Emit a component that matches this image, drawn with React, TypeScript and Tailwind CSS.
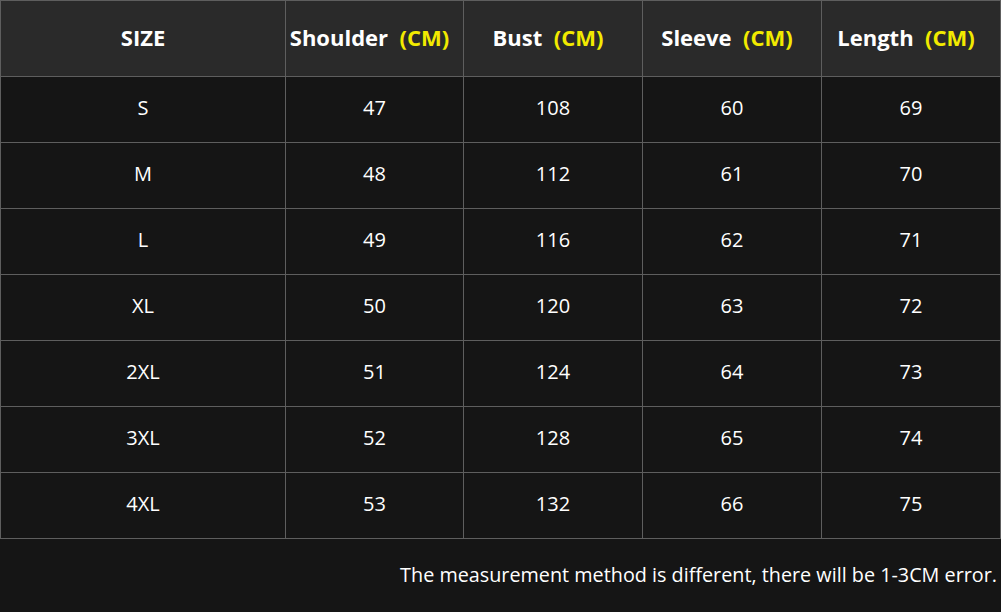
const headers = ['Shoulder', 'Bust', 'Sleeve', 'Length'];

const rows = [
  ['S', '47', '108', '60', '69'],
  ['M', '48', '112', '61', '70'],
  ['L', '49', '116', '62', '71'],
  ['XL', '50', '120', '63', '72'],
  ['2XL', '51', '124', '64', '73'],
  ['3XL', '52', '128', '65', '74'],
  ['4XL', '53', '132', '66', '75'],
];

const font = { fontFamily: '"Open Sans", "Noto Sans", "Liberation Sans", sans-serif' };

export default function App() {
  return (
    <div className="w-[1001px] h-[612px] bg-[#151515] text-white overflow-hidden" style={font}>
      <div className="grid grid-cols-[285px_178px_179px_179px_179px] border-l border-t border-[#5e5e5e] w-[1001px]">
        <div className="h-[76px] pb-[3px] bg-[#2a2a2a] border-r border-b border-[#5e5e5e] flex items-center justify-center text-[22px] font-bold">
          SIZE
        </div>
        {headers.map((h) => (
          <div
            key={h}
            className="h-[76px] pb-[3px] pr-[10px] bg-[#2a2a2a] border-r border-b border-[#5e5e5e] flex items-center justify-center text-[22px] font-bold whitespace-pre"
          >
            {h}
            <span className="text-[#f2ea00]">{'  (CM)'}</span>
          </div>
        ))}
        {rows.map((r) =>
          r.map((v, i) => (
            <div
              key={r[0] + i}
              className="h-[66px] pb-[3px] border-r border-b border-[#5e5e5e] flex items-center justify-center text-[20px]"
            >
              {v}
            </div>
          ))
        )}
      </div>
      <div className="h-[73px] pb-[2px] flex items-center justify-end pr-[4px] text-[19.8px]">
        The measurement method is different, there will be 1-3CM error.
      </div>
    </div>
  );
}
